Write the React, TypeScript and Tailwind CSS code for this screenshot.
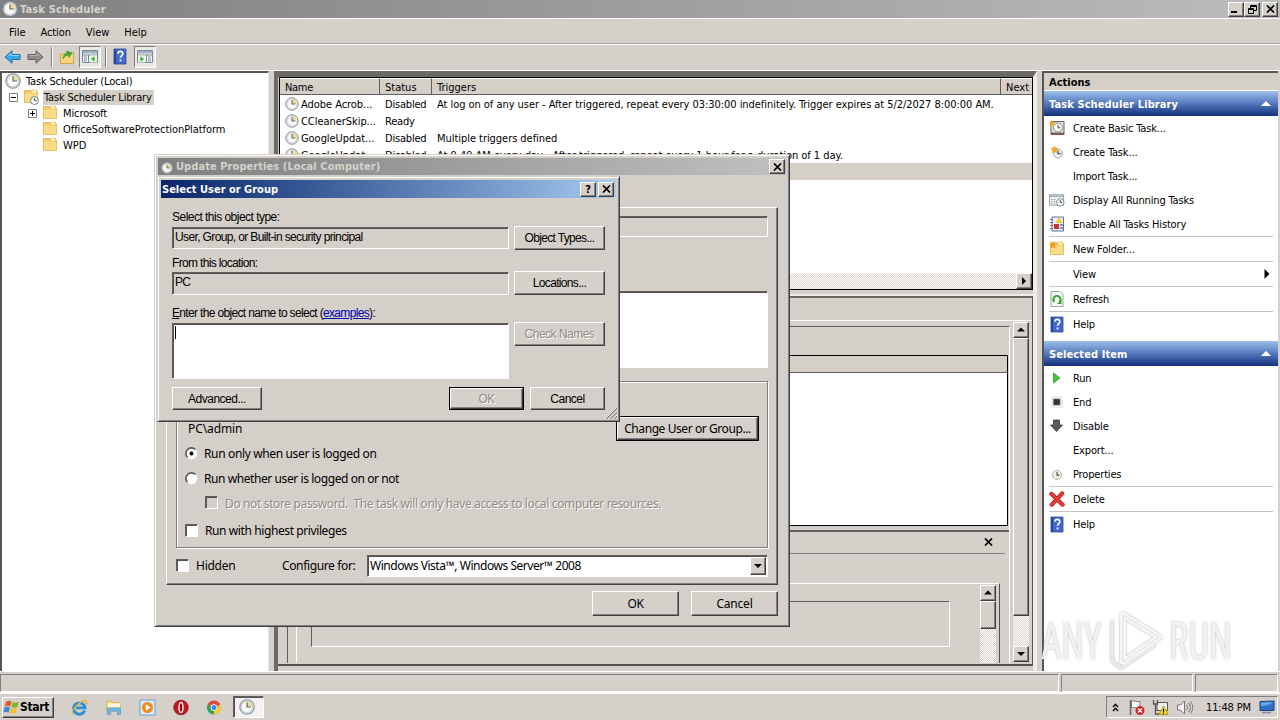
import type { ReactNode } from "react";
import clsx from "clsx";

const tahoma = "font-['DejaVu_Sans_Condensed','DejaVu_Sans',sans-serif] [font-stretch:condensed]";
const raised =
  "border border-t-white border-l-white border-r-[#404040] border-b-[#404040] shadow-[inset_-1px_-1px_0_#808080] bg-[#d5d0c9]";
const sunken =
  "border border-t-[#606060] border-l-[#606060] border-r-white border-b-white shadow-[inset_1px_1px_0_#55524f]";
const dither = "bg-[repeating-conic-gradient(#ffffff_0_25%,#d8d4cd_0_50%)] bg-[length:2px_2px]";

/* ---------- icons ---------- */

function Clock({ size = 16, className }: { size?: number; className?: string }) {
  return (
    <svg width={size} height={size} viewBox="0 0 16 16" className={clsx("shrink-0", className)}>
      <circle cx="8" cy="8" r="7.2" fill="#e3e7ec" stroke="#8d9297" strokeWidth="1.1" />
      <circle cx="8" cy="8" r="5.6" fill="#fbfbf6" stroke="#b9bfc6" strokeWidth=".7" />
      <path d="M8 8V2.4A5.6 5.6 0 0 1 13.6 8z" fill="#f0dc9a" />
      <path d="M8 3.5V8h3.8" fill="none" stroke="#5c6570" strokeWidth="1.2" />
    </svg>
  );
}

function Folder({ clock, star }: { clock?: boolean; star?: boolean }) {
  return (
    <svg width="16" height="16" viewBox="0 0 16 16" className="shrink-0">
      <path d="M1.500 1.500h6l1 1.500h6v10.500h-13z" fill="#f3cd6b" stroke="#d9ab4a" strokeWidth=".8" />
      <path d="M9 1h4.500v3.500H9z" fill="#fff3c4" stroke="#d9ab4a" strokeWidth=".6" />
      <path d="M1.800 4.500h12.500v8.800H1.800z" fill="#fbdc86" />
      {clock && (
        <g>
          <circle cx="11.5" cy="11.5" r="4" fill="#f6f7f7" stroke="#7a7f84" />
          <path d="M11.5 9v2.7h2" fill="none" stroke="#444" strokeWidth=".9" />
        </g>
      )}
      {star && <path d="M4 0l1 2.6 2.8.4-2 1.8.5 2.8L4 6.2 1.5 7.6 2 4.8 0 3l2.9-.4z" fill="#f59a1b" />}
    </svg>
  );
}

function HelpBook() {
  return (
    <svg width="16" height="17" viewBox="0 0 16 17" className="shrink-0">
      <path d="M2 1h12v15H2z" fill="#4469c8" stroke="#2a4796" strokeWidth=".8" />
      <path d="M2 1h2v15H2z" fill="#2a4796" />
      <path d="M6 5.600c.2-3 5-2.800 4.800.2-.1 1.800-2.300 1.800-2.300 4" fill="none" stroke="#fff" strokeWidth="1.700" />
      <path d="M7.600 11.500h1.800v1.800H7.600z" fill="#fff" />
    </svg>
  );
}

function Arrow({ right }: { right?: boolean }) {
  return (
    <svg width="17" height="16" viewBox="0 0 17 16" className={clsx("shrink-0", right && "-scale-x-100")}>
      <path
        d="M1 8l7-6.300v3.800h8v5H8v3.800z"
        fill={right ? "#8d8d8d" : "#39a8e8"}
        stroke={right ? "#606060" : "#1e70ae"}
        strokeWidth="1"
      />
      <path d="M3.500 7.500L7 4.500v2h8" fill="none" stroke={right ? "#b4b4b4" : "#8fd6fa"} />
    </svg>
  );
}

function PaneIcon({ flip }: { flip?: boolean }) {
  return (
    <svg width="16" height="15" viewBox="0 0 16 15" className={clsx(flip && "-scale-x-100")}>
      <path d="M.5 1.500h15v12H.5z" fill="#f4f6f8" stroke="#7d8894" />
      <path d="M1 2h14v2.500H1z" fill="#9fb0c2" />
      <path d="M1 6h14M6.500 6v7.500" stroke="#7d8894" />
      <path d="M2 8h3M2 10h3M2 12h3" stroke="#7890b0" />
      <path d="M8 6.500h7v7H8z" fill="#e5f4df" />
      <path d="M12.500 7.500v5L9 10z" fill="#3ba32b" />
    </svg>
  );
}

function FolderUp() {
  return (
    <svg width="16" height="16" viewBox="0 0 16 16">
      <path d="M1.500 5h5l1-1.500h7v11h-13z" fill="#f8d77c" stroke="#c99a3a" strokeWidth=".8" />
      <path d="M4 10c0-4 2-5.500 4.500-5.500L7.500 2l5.500 2-3 4.500-.7-2.200C7 6.500 5.500 7.500 4 10z" fill="#3fae36" stroke="#27862a" strokeWidth=".5" />
    </svg>
  );
}

function ActionIcon({ name }: { name: string }) {
  switch (name) {
    case "basic":
      return (
        <svg width="16" height="16" viewBox="0 0 16 16">
          <path d="M2 1.500h13v13H2z" fill="#dfe3e6" stroke="#6b625e" />
          <path d="M2 12.500h13v2H2z" fill="#8a5a52" />
          <circle cx="9" cy="7.500" r="4.500" fill="#fffef4" stroke="#8a8f94" />
          <path d="M9 4.800v3h2.400" fill="none" stroke="#444" />
          <path d="M3 0l1 2 2.500.3-1.800 1.600.5 2.300L3 5 .8 6.200l.5-2.300L0 2.300 2 2z" fill="#f5a425" />
        </svg>
      );
    case "task":
      return (
        <svg width="16" height="16" viewBox="0 0 16 16">
          <circle cx="9" cy="9.500" r="4.500" fill="#e9eff5" stroke="#a8adb2" />
          <path d="M9 6.500v3.200h2.800" fill="none" stroke="#4c5560" strokeWidth="1.200" />
          <path d="M5.500 2l1 2.200 2.600.3-1.900 1.800.5 2.500-2.200-1.200-2.200 1.200.5-2.500-1.900-1.800 2.600-.3z" fill="#f5a425" stroke="#f5a425" strokeWidth=".8" />
        </svg>
      );
    case "running":
      return (
        <svg width="17" height="16" viewBox="0 0 17 16">
          <path d="M.5 2.500h15v11H.5z" fill="#fafafa" stroke="#8a97a4" />
          <path d="M1 3h14v2H1z" fill="#a9b5c0" />
          <path d="M2 7.500h6M2 9.500h6M2 11.500h6" stroke="#8aa38a" strokeDasharray="2 1" />
          <circle cx="12" cy="10.500" r="4" fill="#f6f9f7" stroke="#7a8a84" />
          <path d="M12 8v2.700h2" fill="none" stroke="#444" />
        </svg>
      );
    case "history":
      return (
        <svg width="16" height="16" viewBox="0 0 16 16">
          <path d="M3 1h11.500v14H3z" fill="#eef1fa" stroke="#5c6ea8" />
          <path d="M1 3.500h3M1 6.500h3M1 9.500h3M1 12.500h3" stroke="#777" />
          <path d="M10 1l3.500 6h-7z" fill="#f3c92c" />
          <path d="M5 8h5v5H5z" fill="#c5342f" />
          <path d="M11 9h3M11 12h3" stroke="#5c6ea8" strokeWidth="1.500" />
        </svg>
      );
    case "folder":
      return <Folder star />;
    case "refresh":
      return (
        <svg width="16" height="16" viewBox="0 0 16 16">
          <path d="M2 .5h9l3 3v12H2z" fill="#f7faf6" stroke="#9aa79a" />
          <path d="M5.300 11A3.600 3.600 0 1 1 10.500 11" fill="none" stroke="#36a23a" strokeWidth="2" />
          <path d="M12.500 8.500v4.500H8z" fill="#36a23a" />
        </svg>
      );
    case "help":
      return <HelpBook />;
    case "run":
      return (
        <svg width="16" height="16" viewBox="0 0 16 16">
          <path d="M4.500 3l6.500 5-6.500 5z" fill="#45c93b" stroke="#2a9a28" strokeWidth=".8" />
        </svg>
      );
    case "end":
      return (
        <svg width="16" height="16" viewBox="0 0 16 16">
          <path d="M2 2h12v12H2z" fill="#ececec" />
          <path d="M4.500 5h6.500v6H4.500z" fill="#333" stroke="#777" strokeWidth=".6" />
        </svg>
      );
    case "disable":
      return (
        <svg width="16" height="16" viewBox="0 0 16 16">
          <path d="M4.500 2h6v5h3l-6 6.500-6-6.500h3z" fill="#5a5a5a" stroke="#333" strokeWidth=".8" />
        </svg>
      );
    case "props":
      return (
        <svg width="16" height="16" viewBox="0 0 16 16">
          <circle cx="8" cy="9" r="4.500" fill="#f4f1e2" stroke="#b5b3a8" />
          <path d="M8 6v3.200h2.500" fill="none" stroke="#4c5560" strokeWidth="1.200" />
        </svg>
      );
    case "delete":
      return (
        <svg width="17" height="16" viewBox="0 0 17 16">
          <path d="M2.500 2.500l12 11.500M14 2L3 14" stroke="#a81c1c" strokeWidth="4.400" strokeLinecap="round" />
          <path d="M2.500 2.500l12 11.500M14 2L3 14" stroke="#e83a34" strokeWidth="3" strokeLinecap="round" />
        </svg>
      );
    default:
      return null;
  }
}

function Triangle({ dir, size = 8 }: { dir: "up" | "down" | "right"; size?: number }) {
  const paths = { up: "M0 5.500L4 1.500 8 5.500z", down: "M0 2h8L4 6z", right: "M2 0l4 4-4 4z" };
  return (
    <svg width={size} height={size} viewBox="0 0 8 8" className="shrink-0">
      <path d={paths[dir]} fill="#000" />
    </svg>
  );
}

/* ---------- small controls ---------- */

function Cross() {
  return (
    <svg width="9" height="8" viewBox="0 0 9 8">
      <path d="M1 .5l7 7M8 .5l-7 7" stroke="#000" strokeWidth="1.700" />
    </svg>
  );
}

function CaptionButton({ children }: { children: ReactNode }) {
  return <div className={clsx(raised, "flex h-[15px] w-4 shrink-0 items-center justify-center")}>{children}</div>;
}

function ScrollButton({ dir }: { dir: "up" | "down" | "right" }) {
  return (
    <div className={clsx(raised, "flex size-4 shrink-0 items-center justify-center")}>
      <Triangle dir={dir} />
    </div>
  );
}

function Button({ children, className }: { children: ReactNode; className?: string }) {
  return <div className={clsx(raised, "flex shrink-0 items-center justify-center", className)}>{children}</div>;
}

function Check({ disabled }: { disabled?: boolean }) {
  return <div className={clsx(sunken, "mb-0.5 size-[13px] shrink-0", disabled ? "bg-[#d5cfc9]" : "bg-white")} />;
}

function Radio({ checked }: { checked?: boolean }) {
  return (
    <svg width="13" height="13" viewBox="0 0 13 13" className="shrink-0">
      <circle cx="6.500" cy="6.500" r="5.400" fill="#fff" stroke="#fff" />
      <path d="M2.500 10.300A5.400 5.400 0 0 1 10.300 2.500" fill="none" stroke="#555" strokeWidth="1.600" />
      {checked && <circle cx="6.500" cy="6.500" r="2" fill="#000" />}
    </svg>
  );
}

/* ---------- main window ---------- */

function TitleBar() {
  return (
    <div className="flex h-[18px] items-center bg-linear-to-r from-[#808080] to-[#bcbcbc] pr-0.5 pl-0.5">
      <Clock />
      <span className="ml-[2px] pt-0.5 text-[11px] font-bold tracking-[0.15px] text-[#d6d2cb]">Task Scheduler</span>
      <div className="ml-auto flex">
        <CaptionButton>
          <div className="mt-1.5 mr-1 h-0.5 w-1.5 bg-black" />
        </CaptionButton>
        <CaptionButton>
          <svg width="9" height="9" viewBox="0 0 9 9" fill="none" stroke="#000">
            <path d="M2.500 3V.5h6v5H6M2.500 1.500h6M.5 3.500h5v5h-5zM.5 4.500h5" />
          </svg>
        </CaptionButton>
        <div className="w-0.5" />
        <CaptionButton>
          <Cross />
        </CaptionButton>
      </div>
    </div>
  );
}

function Toolbar() {
  return (
    <div className="flex h-[23px] items-center pl-1">
      <Arrow />
      <div className="w-1.5" />
      <Arrow right />
      <div className="mr-1.5 ml-[7px] h-5 w-0.5 border-l border-[#808080] bg-white" />
      <FolderUp />
      <div className="ml-1 flex h-[22px] w-[22px] items-center justify-center border border-t-[#808080] border-r-white border-b-white border-l-[#808080] bg-[#eceae6]">
        <PaneIcon />
      </div>
      <div className="mr-[5px] ml-[4px] h-5 w-0.5 border-l border-[#808080] bg-white" />
      <HelpBook />
      <div className="ml-1.5 flex h-[22px] w-[22px] items-center justify-center border border-t-[#808080] border-r-white border-b-white border-l-[#808080] bg-[#eceae6]">
        <PaneIcon flip />
      </div>
    </div>
  );
}

function Expander({ open }: { open?: boolean }) {
  return (
    <svg width="9" height="9" viewBox="0 0 9 9" className="shrink-0">
      <path d="M.5.5h8v8h-8z" fill="#fff" stroke="#808080" />
      <path d={open ? "M2 4.500h5" : "M2 4.500h5M4.500 2v5"} stroke="#000" />
    </svg>
  );
}

function Tree() {
  return (
    <div className="w-[269px] shrink-0 border-t-2 border-r border-l-2 border-t-[#555] border-r-[#e8e6e2] border-l-[#555] bg-white">
      <div className="flex h-4 items-center pl-[3px]">
        <Clock />
        <span className="ml-[5px] pt-0.5 tracking-[-0.18px]">Task Scheduler (Local)</span>
      </div>
      <div className="flex h-4 items-center pl-[7px]">
        <Expander open />
        <div className="w-[5px]" />
        <Folder clock />
        <span className="ml-1 flex h-[15px] items-center bg-[#d4d0c8] pt-0.5 pr-0.5 pl-px tracking-[-0.18px]">Task Scheduler Library</span>
      </div>
      <div className="flex h-4 items-center pl-[26px]">
        <Expander />
        <div className="w-[5px]" />
        <Folder />
        <span className="ml-[5px] pt-0.5 tracking-[-0.1px]">Microsoft</span>
      </div>
      <div className="flex h-4 items-center pl-10">
        <Folder />
        <span className="ml-[5px] pt-0.5 tracking-[-0.06px]">OfficeSoftwareProtectionPlatform</span>
      </div>
      <div className="flex h-4 items-center pl-10">
        <Folder />
        <span className="ml-[5px] pt-0.5">WPD</span>
      </div>
    </div>
  );
}

const tasks = [
  ["Adobe Acrob...", "Disabled", "At log on of any user - After triggered, repeat every 03:30:00 indefinitely. Trigger expires at 5/2/2027 8:00:00 AM."],
  ["CCleanerSkip...", "Ready", ""],
  ["GoogleUpdat...", "Disabled", "Multiple triggers defined"],
  ["GoogleUpdat...", "Disabled", "At 9:49 AM every day - After triggered, repeat every 1 hour for a duration of 1 day."],
];

function HeaderCell({ children, className }: { children: ReactNode; className: string }) {
  return (
    <div className={clsx("flex h-full items-center border-t border-r border-b border-t-white border-r-[#606060] border-b-[#606060] pt-0.5 pl-[5px]", className)}>
      {children}
    </div>
  );
}

function TaskList() {
  return (
    <div className="ml-px flex h-[213px] flex-col border border-black bg-white">
      <div className="flex h-[17px] shrink-0 bg-[#d4d0c8]">
        <HeaderCell className="w-[100px] tracking-[-0.3px]">Name</HeaderCell>
        <HeaderCell className="w-[52px]">Status</HeaderCell>
        <HeaderCell className="w-[569px]">Triggers</HeaderCell>
        <HeaderCell className="w-[31px] border-r-0">Next</HeaderCell>
      </div>
      {tasks.map(([name, status, trigger], i) => (
        <div key={i} className="flex h-[17px] shrink-0 items-center whitespace-pre">
          <div className="flex w-[105px] items-center pl-[5px]">
            <Clock size={14} />
            <span className="ml-0.5 pt-0.5 tracking-[-0.05px]">{name}</span>
          </div>
          <span className="w-[52px] pt-0.5 tracking-[-0.2px]">{status}</span>
          <span className="pt-0.5 tracking-[-0.045px]">{trigger}</span>
        </div>
      ))}
      <div className="h-[17px] shrink-0 bg-[#d4d0c8]" />
      <div className="flex-1" />
      <div className={clsx("flex h-4 justify-end", dither)}>
        <ScrollButton dir="right" />
      </div>
    </div>
  );
}

function Preview() {
  return (
    <div className="flex h-[370px] flex-col border-t-2 border-r border-b-2 border-t-[#6a6763] border-r-[#555] border-b-[#55524f]">
      <div className="h-[22px] shrink-0" />
      <div className="flex h-[345px] border-t border-white pl-[9px]">
        <div className="mt-[5px] flex h-[337px] w-[723px] flex-col border-t border-r border-l border-t-[#606060] border-r-white border-l-[#606060]">
          <div className="mt-[28px] mr-px h-[171px] border border-black bg-white">
            <div className="h-[17px] border-b border-[#606060] bg-[#d4d0c8]" />
          </div>
          <div className="mt-1 flex h-[23px] items-center justify-end border-t-2 border-[#606060] pr-4 pb-0.5">
            <Cross />
          </div>
          <div className="mr-1 h-px bg-[#808080]" />
          <div className="mt-[29px] ml-2 flex w-[704px] flex-1 border-t border-r border-l border-t-white border-r-[#505050] border-l-white">
            <div className={clsx(sunken, "mt-[17px] ml-[14px] h-[46px] w-[639px] shadow-none")} />
            <div className={clsx("mt-px ml-[30px] flex w-4 flex-col", dither)}>
              <ScrollButton dir="up" />
              <div className={clsx(raised, "h-7")} />
            </div>
          </div>
        </div>
        <div className={clsx("mt-px ml-[3px] flex h-[340px] w-4 flex-col", dither)}>
          <ScrollButton dir="up" />
          <div className={clsx(raised, "h-[278px]")} />
          <div className="flex-1" />
          <ScrollButton dir="down" />
        </div>
      </div>
    </div>
  );
}

function ActionHeader({ children }: { children: ReactNode }) {
  return (
    <div className="flex h-[25px] items-center justify-between bg-linear-to-b from-[#9dbfea] via-[#5679bd] to-[#14317c] pr-[7px] pl-[5px] font-bold tracking-[0.1px] text-white">
      <span className="pt-0.5">{children}</span>
      <svg width="10" height="5" viewBox="0 0 10 5">
        <path d="M5 0l5 5H0z" fill="#fff" />
      </svg>
    </div>
  );
}

function Action({ icon, children, more }: { icon?: string; children: ReactNode; more?: boolean }) {
  return (
    <div className="flex h-6 items-center pl-[5px]">
      <div className="flex w-4 justify-center">{icon && <ActionIcon name={icon} />}</div>
      <span className="ml-2 pt-0.5 tracking-[-0.16px]">{children}</span>
      {more && (
        <div className="mr-[6px] ml-auto">
          <Triangle dir="right" size={10} />
        </div>
      )}
    </div>
  );
}

function Rule() {
  return <div className="mr-[5px] ml-[5px] h-px bg-[#c4c4c4]" />;
}

function Actions() {
  return (
    <div className="w-[236px] shrink-0 border-t-2 border-l-2 border-[#555] bg-white">
      <div className="flex h-[17px] items-center bg-[#d4d0c8] pt-0.5 pl-[5px] font-bold">Actions</div>
      <div className="h-px" />
      <ActionHeader>Task Scheduler Library</ActionHeader>
      <Action icon="basic">Create Basic Task...</Action>
      <Action icon="task">Create Task...</Action>
      <Action>Import Task...</Action>
      <Action icon="running">Display All Running Tasks</Action>
      <Action icon="history">Enable All Tasks History</Action>
      <Rule />
      <Action icon="folder">New Folder...</Action>
      <Rule />
      <Action more>View</Action>
      <Rule />
      <Action icon="refresh">Refresh</Action>
      <Rule />
      <Action icon="help">Help</Action>
      <div className="h-[5px]" />
      <ActionHeader>Selected Item</ActionHeader>
      <Action icon="run">Run</Action>
      <Action icon="end">End</Action>
      <Action icon="disable">Disable</Action>
      <Action>Export...</Action>
      <Action icon="props">Properties</Action>
      <Rule />
      <Action icon="delete">Delete</Action>
      <Rule />
      <Action icon="help">Help</Action>
    </div>
  );
}

/* ---------- dialogs ---------- */

function PropertiesDialog() {
  return (
    <div className="absolute top-[154px] left-[154px] h-[473px] w-[636px] border border-t-[#d4d0c8] border-r-[#404040] border-b-[#404040] border-l-[#d4d0c8] bg-[#d5cfc9] p-[3px] font-['Noto_Sans',sans-serif] text-[12px] tracking-[-0.36px] shadow-[inset_1px_1px_0_#fff,inset_-1px_-1px_0_#808080]">
      <div className={clsx("flex h-[17px] items-center bg-linear-to-r from-[#808080] to-[#c0c0c0] pr-[1px] pl-[3px]", tahoma)}>
        <Clock size={12} className="mt-0.5" />
        <span className="ml-[3px] text-[11px] font-bold tracking-[0.07px] text-[#d6d2cb]">Update Properties (Local Computer)</span>
        <div className="ml-auto">
          <CaptionButton>
            <Cross />
          </CaptionButton>
        </div>
      </div>
      <div className="mt-8 ml-2 h-[378px] w-[612px] border border-t-white border-r-[#404040] border-b-[#404040] border-l-white pl-[9px] shadow-[inset_-1px_-1px_0_#808080]">
        <div className={clsx(sunken, "mt-2 h-[21px] w-[592px]")} />
        <div className={clsx(sunken, "mt-[54px] h-[77px] w-[592px] bg-white")} />
        <div className="mt-[13px] h-[167px] w-[592px] border border-[#808080] pl-2 shadow-[1px_1px_0_#fff,inset_1px_1px_0_#fff]">
          <div className="mt-[34px] flex h-[25px] items-center justify-between pr-2 pl-[3px]">
            <span className="tracking-[-0.1px]">PC\admin</span>
            <div className="border border-black">
              <Button className="h-[23px] w-[141px] tracking-[-0.42px]">Change User or Group...</Button>
            </div>
          </div>
          <div className="flex h-[25px] items-center">
            <Radio checked />
            <span className="ml-1.5">Run only when user is logged on</span>
          </div>
          <div className="flex h-[25px] items-center">
            <Radio />
            <span className="ml-1.5 tracking-[-0.42px]">Run whether user is logged on or not</span>
          </div>
          <div className="flex h-[25px] items-center pl-5">
            <Check disabled />
            <span className="ml-[7px] whitespace-pre text-[#908c87] [text-shadow:1px_1px_0_#fff]">
              Do not store password.  The task will only have access to local computer resources.
            </span>
          </div>
          <div className="mt-[3px] flex h-6 items-center">
            <Check />
            <span className="ml-[7px] tracking-[-0.4px]">Run with highest privileges</span>
          </div>
        </div>
        <div className="mt-[7px] flex h-[22px] w-[592px] items-center">
          <Check />
          <span className="ml-[7px] w-[86px] tracking-[-0.25px]">Hidden</span>
          <span>Configure for:</span>
          <div className={clsx(sunken, "ml-auto flex h-[22px] w-[401px] items-center bg-white py-px pr-px pl-0.5")}>
            <span className="flex-1 tracking-[-0.46px]">Windows Vista™, Windows Server™ 2008</span>
            <Button className="h-[18px] w-4">
              <Triangle dir="down" />
            </Button>
          </div>
        </div>
      </div>
      <div className="mt-1.5 flex justify-end gap-3 pr-2">
        <Button className="h-[25px] w-[87px]">OK</Button>
        <Button className="h-[25px] w-[87px] tracking-[-0.2px]">Cancel</Button>
      </div>
    </div>
  );
}

function SelectUserDialog() {
  return (
    <div className="absolute top-[176px] left-[157px] h-[246px] w-[463px] border border-t-[#d4d0c8] border-r-[#404040] border-b-[#404040] border-l-[#d4d0c8] bg-[#d5cfc9] p-[3px] font-['Liberation_Sans',sans-serif] text-[12px] tracking-[-0.66px] shadow-[inset_1px_1px_0_#fff,inset_-1px_-1px_0_#808080]">
      <div className={clsx("flex h-[18px] items-center gap-0.5 bg-linear-to-r from-[#0a246a] to-[#a6caf0] pr-0.5 pl-px text-[11px] tracking-normal", tahoma)}>
        <span className="mr-auto pt-0.5 font-bold text-white">Select User or Group</span>
        <CaptionButton>
          <span className="text-[11px] leading-none font-bold">?</span>
        </CaptionButton>
        <CaptionButton>
          <Cross />
        </CaptionButton>
      </div>
      <div className="pr-[11px] pl-[11px]">
        <div className="flex h-7 items-center pt-[10px] tracking-[-0.52px]">Select this object type:</div>
        <div className="flex h-6 items-center justify-between">
          <div className={clsx(sunken, "flex h-[22px] w-[337px] items-center pb-0.5 pl-0.5 tracking-[-0.63px]")}>
            User, Group, or Built-in security principal
          </div>
          <Button className="h-6 w-[91px]">Object Types...</Button>
        </div>
        <div className="flex h-[21px] items-center pt-1">From this location:</div>
        <div className="flex h-6 items-center justify-between">
          <div className={clsx(sunken, "flex h-[23px] w-[337px] items-center pb-0.5 pl-0.5")}>PC</div>
          <Button className="h-6 w-[91px]">Locations...</Button>
        </div>
        <div className="flex h-[27px] items-center pt-[9px] whitespace-pre">
          <u>E</u>nter the object name to select (<u className="text-[#0000b0]">examples</u>):
        </div>
        <div className="flex h-[57px] justify-between">
          <div className={clsx(sunken, "mt-px h-14 w-[337px] bg-white p-0.5")}>
            <div className="h-[13px] w-px bg-black" />
          </div>
          <Button className="h-6 w-[91px] tracking-[-0.5px] text-[#908c87] [text-shadow:1px_1px_0_#fff]">Check Names</Button>
        </div>
        <div className="mt-2 flex h-[23px]">
          <Button className="h-[23px] w-[90px] tracking-[-0.5px]">Advanced...</Button>
          <div className="mr-1.5 ml-auto border border-black">
            <Button className="h-[21px] w-[73px] text-[#908c87] [text-shadow:1px_1px_0_#fff]">OK</Button>
          </div>
          <Button className="h-[23px] w-[75px] tracking-[-0.5px]">Cancel</Button>
        </div>
      </div>
      <svg width="12" height="12" viewBox="0 0 12 12" className="absolute right-0.5 bottom-0.5">
        <path d="M1 12L12 1M5 12l7-7M9 12l3-3" stroke="#808080" strokeWidth="1.400" />
        <path d="M0 12L12 0M4 12l8-8M8 12l4-4" stroke="#fff" strokeWidth=".7" />
      </svg>
    </div>
  );
}

/* ---------- bottom ---------- */

function StatusBar() {
  const cell = "h-[18px] border border-t-[#808080] border-l-[#808080] border-r-white border-b-white";
  return (
    <div className="flex h-5 items-end gap-0.5 pr-0.5">
      <div className={clsx(cell, "flex-1")} />
      <div className={clsx(cell, "w-[132px]")} />
      <div className={clsx(cell, "w-[83px]")} />
    </div>
  );
}

function Taskbar() {
  return (
    <div className="flex h-7 items-center border-t-2 border-white pr-0.5 pl-0.5">
      <div className={clsx(raised, "flex h-[21px] w-[52px] items-center")}>
        <svg width="17" height="16" viewBox="0 0 16 15">
          <path d="M3 2.500C5 1 6.500 1.500 8 2.300L6.800 7C5 6.200 3.500 6.200 1.700 7z" fill="#e8562a" />
          <path d="M9 2.800c1.800.9 3.500 1 5.800-.2L13.500 7.300c-2 1.100-3.800 1-5.600.1z" fill="#7cb82f" />
          <path d="M1.400 8C3.200 7 4.800 7.200 6.500 8L5.300 12.700C3.700 12 2 11.800.2 12.700z" fill="#3c86d8" />
          <path d="M7.600 8.400c1.800.9 3.600.9 5.600-.1L12 12.900c-2 1.100-3.800 1-5.600.2z" fill="#f5bf2c" />
        </svg>
        <span className="text-[12px] font-bold tracking-[-0.35px]">Start</span>
      </div>
      <div className="ml-[17px] flex items-center gap-[17px]">
        <svg width="17" height="17" viewBox="0 0 17 17">
          <path d="M13.700 11.500A5.700 5.700 0 1 1 14 8.800H5" fill="none" stroke="#2b8fd8" strokeWidth="2.800" />
          <path d="M1.500 15.500C-.5 12 8 2.500 14 1.500c2.500-.3 2 2.500 1 4" fill="none" stroke="#e9b52e" strokeWidth="1.300" />
        </svg>
        <svg width="17" height="17" viewBox="0 0 17 17">
          <path d="M1.500 2h5l1 1.500h7.500V12h-13.500z" fill="#f3d886" stroke="#cfa94c" strokeWidth=".7" />
          <path d="M3 4.500h12v3.500H3z" fill="#fff8db" />
          <path d="M2.500 9h13v6.500h-3V12h-7v3.500h-3z" fill="#6db7e6" stroke="#4d93c4" strokeWidth=".6" />
        </svg>
        <svg width="17" height="17" viewBox="0 0 17 17">
          <path d="M1 1h15v15H1z" fill="#dcebf7" stroke="#6b9fce" />
          <circle cx="8.500" cy="8.500" r="5.500" fill="#f28a1e" />
          <path d="M6.800 5.300l5 3.200-5 3.200z" fill="#fff" />
        </svg>
        <svg width="16" height="17" viewBox="0 0 16 17">
          <circle cx="8" cy="8.500" r="7.300" fill="#c4161c" stroke="#8a1014" strokeWidth=".7" />
          <ellipse cx="8" cy="8.500" rx="2" ry="5" fill="#8f0e12" stroke="#fff" strokeWidth="1.300" />
        </svg>
        <svg width="16" height="17" viewBox="0 0 16 17">
          <path d="M8 8.500L1.900 5A7 7 0 0 1 14.100 5z" fill="#dd4b3a" />
          <path d="M8 8.500L1.900 5A7 7 0 0 0 8 15.500z" fill="#34a353" />
          <path d="M8 8.500L14.100 5A7 7 0 0 1 8 15.500z" fill="#f7c92e" />
          <path d="M2 5h12l-3 3H5z" fill="#dd4b3a" />
          <circle cx="8" cy="8.500" r="3.300" fill="#fff" />
          <circle cx="8" cy="8.500" r="2.500" fill="#4285f4" />
        </svg>
      </div>
      <div className={clsx(sunken, "ml-[11px] flex h-[22px] w-[31px] items-center justify-center bg-[#f3f2f0] pr-1")}>
        <Clock />
      </div>
      <div className="ml-auto flex h-[22px] w-[172px] items-center border border-t-[#808080] border-r-white border-b-white border-l-[#808080]">
        <svg width="7" height="9" viewBox="0 0 7 9" className="ml-[5px]" fill="none" stroke="#000" strokeWidth="1.300">
          <path d="M1 4l2.500-2.800L6 4M1 8l2.500-2.800L6 8" />
        </svg>
        <svg width="17" height="17" viewBox="0 0 17 17" className="ml-[9px]">
          <path d="M2.500 1v15" stroke="#666" strokeWidth="1.500" />
          <path d="M3.500 2c3-1 4 1.500 8.500.5V9c-4 1-5.500-1.200-8.500-.5z" fill="#fff" stroke="#777" />
          <circle cx="12" cy="11.500" r="4.500" fill="#d8262c" />
          <path d="M10 9.500l4 4M14 9.500l-4 4" stroke="#fff" strokeWidth="1.400" />
        </svg>
        <svg width="17" height="17" viewBox="0 0 17 17" className="ml-[7px]">
          <path d="M5 3.500h10.500v8H5z" fill="#eee" stroke="#555" />
          <path d="M1.500 1v4h4V1M3.500 5v10h6" fill="none" stroke="#555" strokeWidth="1.300" />
          <path d="M11.500 7l4.700 8.500H6.800z" fill="#f6d32c" stroke="#a98b12" strokeWidth=".7" />
          <path d="M11.500 9.800v3M11.500 13.500v1.200" stroke="#000" strokeWidth="1.200" />
        </svg>
        <svg width="17" height="17" viewBox="0 0 17 17" className="ml-[7px]" fill="none" stroke="#777">
          <path d="M1.500 6h3L8.500 2v13l-4-4h-3z" fill="#f5f5f5" />
          <path d="M10.500 6c1.300 1.500 1.300 3.500 0 5M12.500 4c2.500 2.500 2.500 6.500 0 9M14.500 2.500c3 3.500 3 8.500 0 12" />
        </svg>
        <span className="ml-[13px] pt-px tracking-[-0.15px] whitespace-nowrap">11:48 PM</span>
        <svg width="16" height="14" viewBox="0 0 16 14" className="mr-0.5 ml-auto">
          <path d="M1 1.500l14-.5v9.500H1z" fill="#2f6fc7" stroke="#1f3f7a" />
          <path d="M2 2.500l12-.5C11 5 6 6 2 6z" fill="#6ba8ea" />
          <path d="M3 12.500h9" stroke="#88a" strokeWidth="1.500" />
        </svg>
      </div>
    </div>
  );
}

function Watermark() {
  return (
    <div className="pointer-events-none absolute top-[609px] left-[1041px] flex h-[64px] w-[196px] items-center font-['Roboto',sans-serif] text-[51px] leading-none text-[#f6f6f6]/90 [text-shadow:0_0_3px_#b8b8b8]">
      <span className="w-[67px] origin-left scale-x-[0.7]">ANY</span>
      <svg width="58" height="62" viewBox="0 0 58 62" className="shrink-0 drop-shadow-[0_0_1px_#b0b0b0]" fill="none">
        <path d="M15 5l36 22-36 25z" stroke="#f6f6f6" strokeWidth="6" strokeLinejoin="round" />
        <path d="M15 5l36 22-36 25z" stroke="#dfdfdf" strokeWidth="1" strokeLinejoin="round" />
        <path d="M4 10v41l9 7 34-23" stroke="#ebebeb" strokeWidth="3" />
      </svg>
      <span className="ml-[3px] w-[62px] origin-left scale-x-[0.72]">RUN</span>
    </div>
  );
}

export default function App() {
  return (
    <div className={clsx("relative flex h-[720px] w-[1280px] flex-col overflow-hidden bg-[#d5d0c9] text-[11px] leading-[14px] text-black", tahoma)}>
      <TitleBar />
      <div className="flex h-[26px] items-center gap-[15px] border-t border-b border-t-white border-b-[#a8a49e] pt-[3px] pl-[9px]">
        <span>File</span>
        <span className="tracking-[-0.1px]">Action</span>
        <span>View</span>
        <span>Help</span>
      </div>
      <div className="h-[27px] border-t border-b border-white">
        <Toolbar />
      </div>
      <div className="flex h-[601px] border-b border-white">
        <Tree />
        <div className="ml-[5px] w-[763px] shrink-0 border-t-[6px] border-r-4 border-l-4 border-t-[#6c6a67] border-r-[#efedea] border-l-[#6c6a67]">
          <TaskList />
          <div className="h-1.5 border-b-2 border-[#efedea]" />
          <Preview />
        </div>
        <div className="w-[5px]" />
        <Actions />
      </div>
      <StatusBar />
      <Taskbar />
      <Watermark />
      <PropertiesDialog />
      <SelectUserDialog />
    </div>
  );
}
